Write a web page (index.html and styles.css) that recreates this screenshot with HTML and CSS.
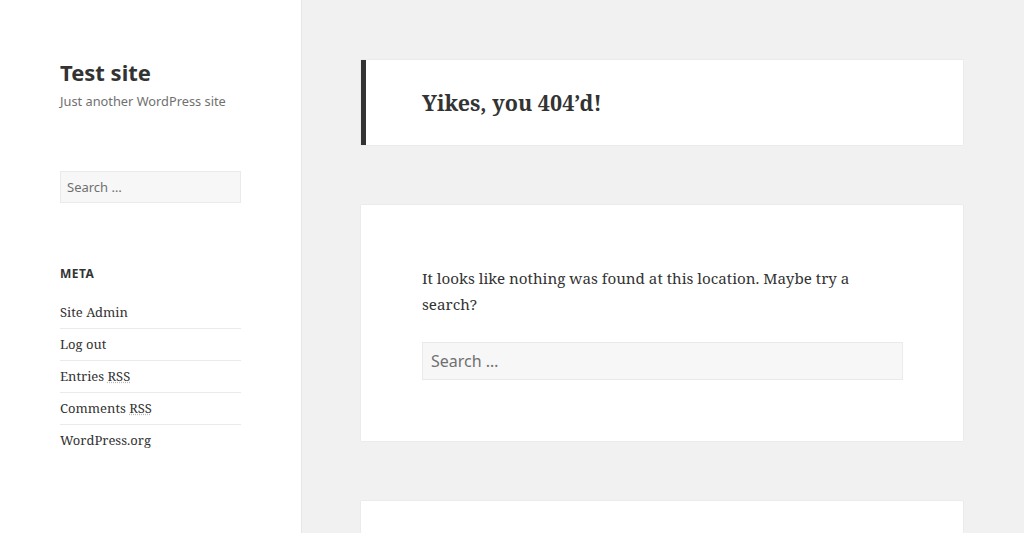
FILE: index.html
```html
<!DOCTYPE html>
<html lang="en-US">
<head>
    <meta charset="UTF-8">
    <meta name="viewport" content="width=device-width, initial-scale=1.0">
    <title>Page not found – Test site</title>
    <link rel="stylesheet" href="styles.css">
</head>
<body>
<div class="site">
    <div class="sidebar">
        <header class="site-header">
            <p class="site-title"><a href="#">Test site</a></p>
            <p class="site-description">Just another WordPress site</p>
        </header>

        <div class="widget-area">
            <aside class="widget">
                <form class="search-form">
                    <input type="search" class="search-field search-small" placeholder="Search &hellip;">
                </form>
            </aside>

            <aside class="widget">
                <h2 class="widget-title">Meta</h2>
                <ul class="meta-list">
                    <li><a href="#">Site Admin</a></li>
                    <li><a href="#">Log out</a></li>
                    <li><a href="#">Entries <abbr title="Really Simple Syndication">RSS</abbr></a></li>
                    <li><a href="#">Comments <abbr title="Really Simple Syndication">RSS</abbr></a></li>
                    <li><a href="#">WordPress.org</a></li>
                </ul>
            </aside>
        </div>
    </div>

    <main class="site-main">
        <section class="box page-header">
            <h1 class="page-title">Yikes, you 404&rsquo;d!</h1>
        </section>

        <section class="box page-content">
            <p>It looks like nothing was found at this location. Maybe try a search?</p>
            <form class="search-form">
                <input type="search" class="search-field" placeholder="Search &hellip;">
            </form>
        </section>

        <section class="box page-footer"></section>
    </main>
</div>
</body>
</html>
```

FILE: styles.css
```css
html, body {
    margin: 0;
    padding: 0;
}

body {
    background: #f1f1f1;
    color: #333333;
    font-family: "Noto Serif", "DejaVu Serif", serif;
    font-size: 15px;
    line-height: 1.6;
    height: 533px;
    overflow: hidden;
}

a {
    color: #333333;
    text-decoration: none;
}

.site {
    display: grid;
    grid-template-columns: 302px 1fr;
    min-height: 100vh;
}

/* barra lateral */
.sidebar {
    background: #ffffff;
    border-right: 1px solid #e6e6e6;
    padding: 58px 60px 0 60px;
}

.site-header p {
    margin: 0;
}

.site-title {
    font-family: "Noto Sans", sans-serif;
    font-size: 22px;
    font-weight: 700;
    line-height: 28px;
}

.site-description {
    font-family: "Noto Sans", sans-serif;
    font-size: 12.8px;
    line-height: 16px;
    color: #707070;
    margin-top: 7px !important;
}

.widget-area {
    margin-top: 62px;
}

.widget {
    margin-bottom: 63px;
}

.search-field {
    display: block;
    width: 100%;
    box-sizing: border-box;
    background: #f7f7f7;
    border: 1px solid #eaeaea;
    border-radius: 0;
    color: #707070;
    font-family: "Noto Sans", sans-serif;
    font-size: 16px;
    height: 38px;
    padding: 0 8px;
    margin: 0;
    outline: none;
}

.search-field::placeholder {
    color: #707070;
}

.search-small {
    font-size: 13px;
    height: 32px;
    padding: 0 6px;
}

.widget-title {
    font-family: "Noto Sans", sans-serif;
    font-size: 12px;
    font-weight: 700;
    letter-spacing: 0.04em;
    text-transform: uppercase;
    line-height: 16px;
    margin: 0 0 21px 0;
}

.meta-list {
    list-style: none;
    margin: 0;
    padding: 0;
    font-size: 13px;
    line-height: 18px;
}

.meta-list li {
    padding: 6px 0 7px 0;
    border-top: 1px solid #eaeaea;
}

.meta-list li:first-child {
    border-top: 0;
    padding-top: 0;
}

.meta-list abbr {
    text-decoration: underline dotted;
    text-decoration-color: #bbbbbb;
}

/* contenido principal */
.site-main {
    padding: 60px 61px 0 59px;
    display: flex;
    flex-direction: column;
    gap: 60px;
}

.box {
    background: #ffffff;
    box-shadow: 0 0 1px rgba(0, 0, 0, 0.15);
}

.page-header {
    border-left: 5px solid #333333;
    padding: 24px 60px 23px 56px;
}

.page-title {
    margin: 0;
    font-size: 21.5px;
    font-weight: 700;
    line-height: 38px;
}

.page-content {
    padding: 60px 60px 61px 61px;
}

.page-content p {
    margin: 0 0 25px 0;
    font-size: 15.2px;
    line-height: 26px;
}

.page-footer {
    height: 200px;
}
```
